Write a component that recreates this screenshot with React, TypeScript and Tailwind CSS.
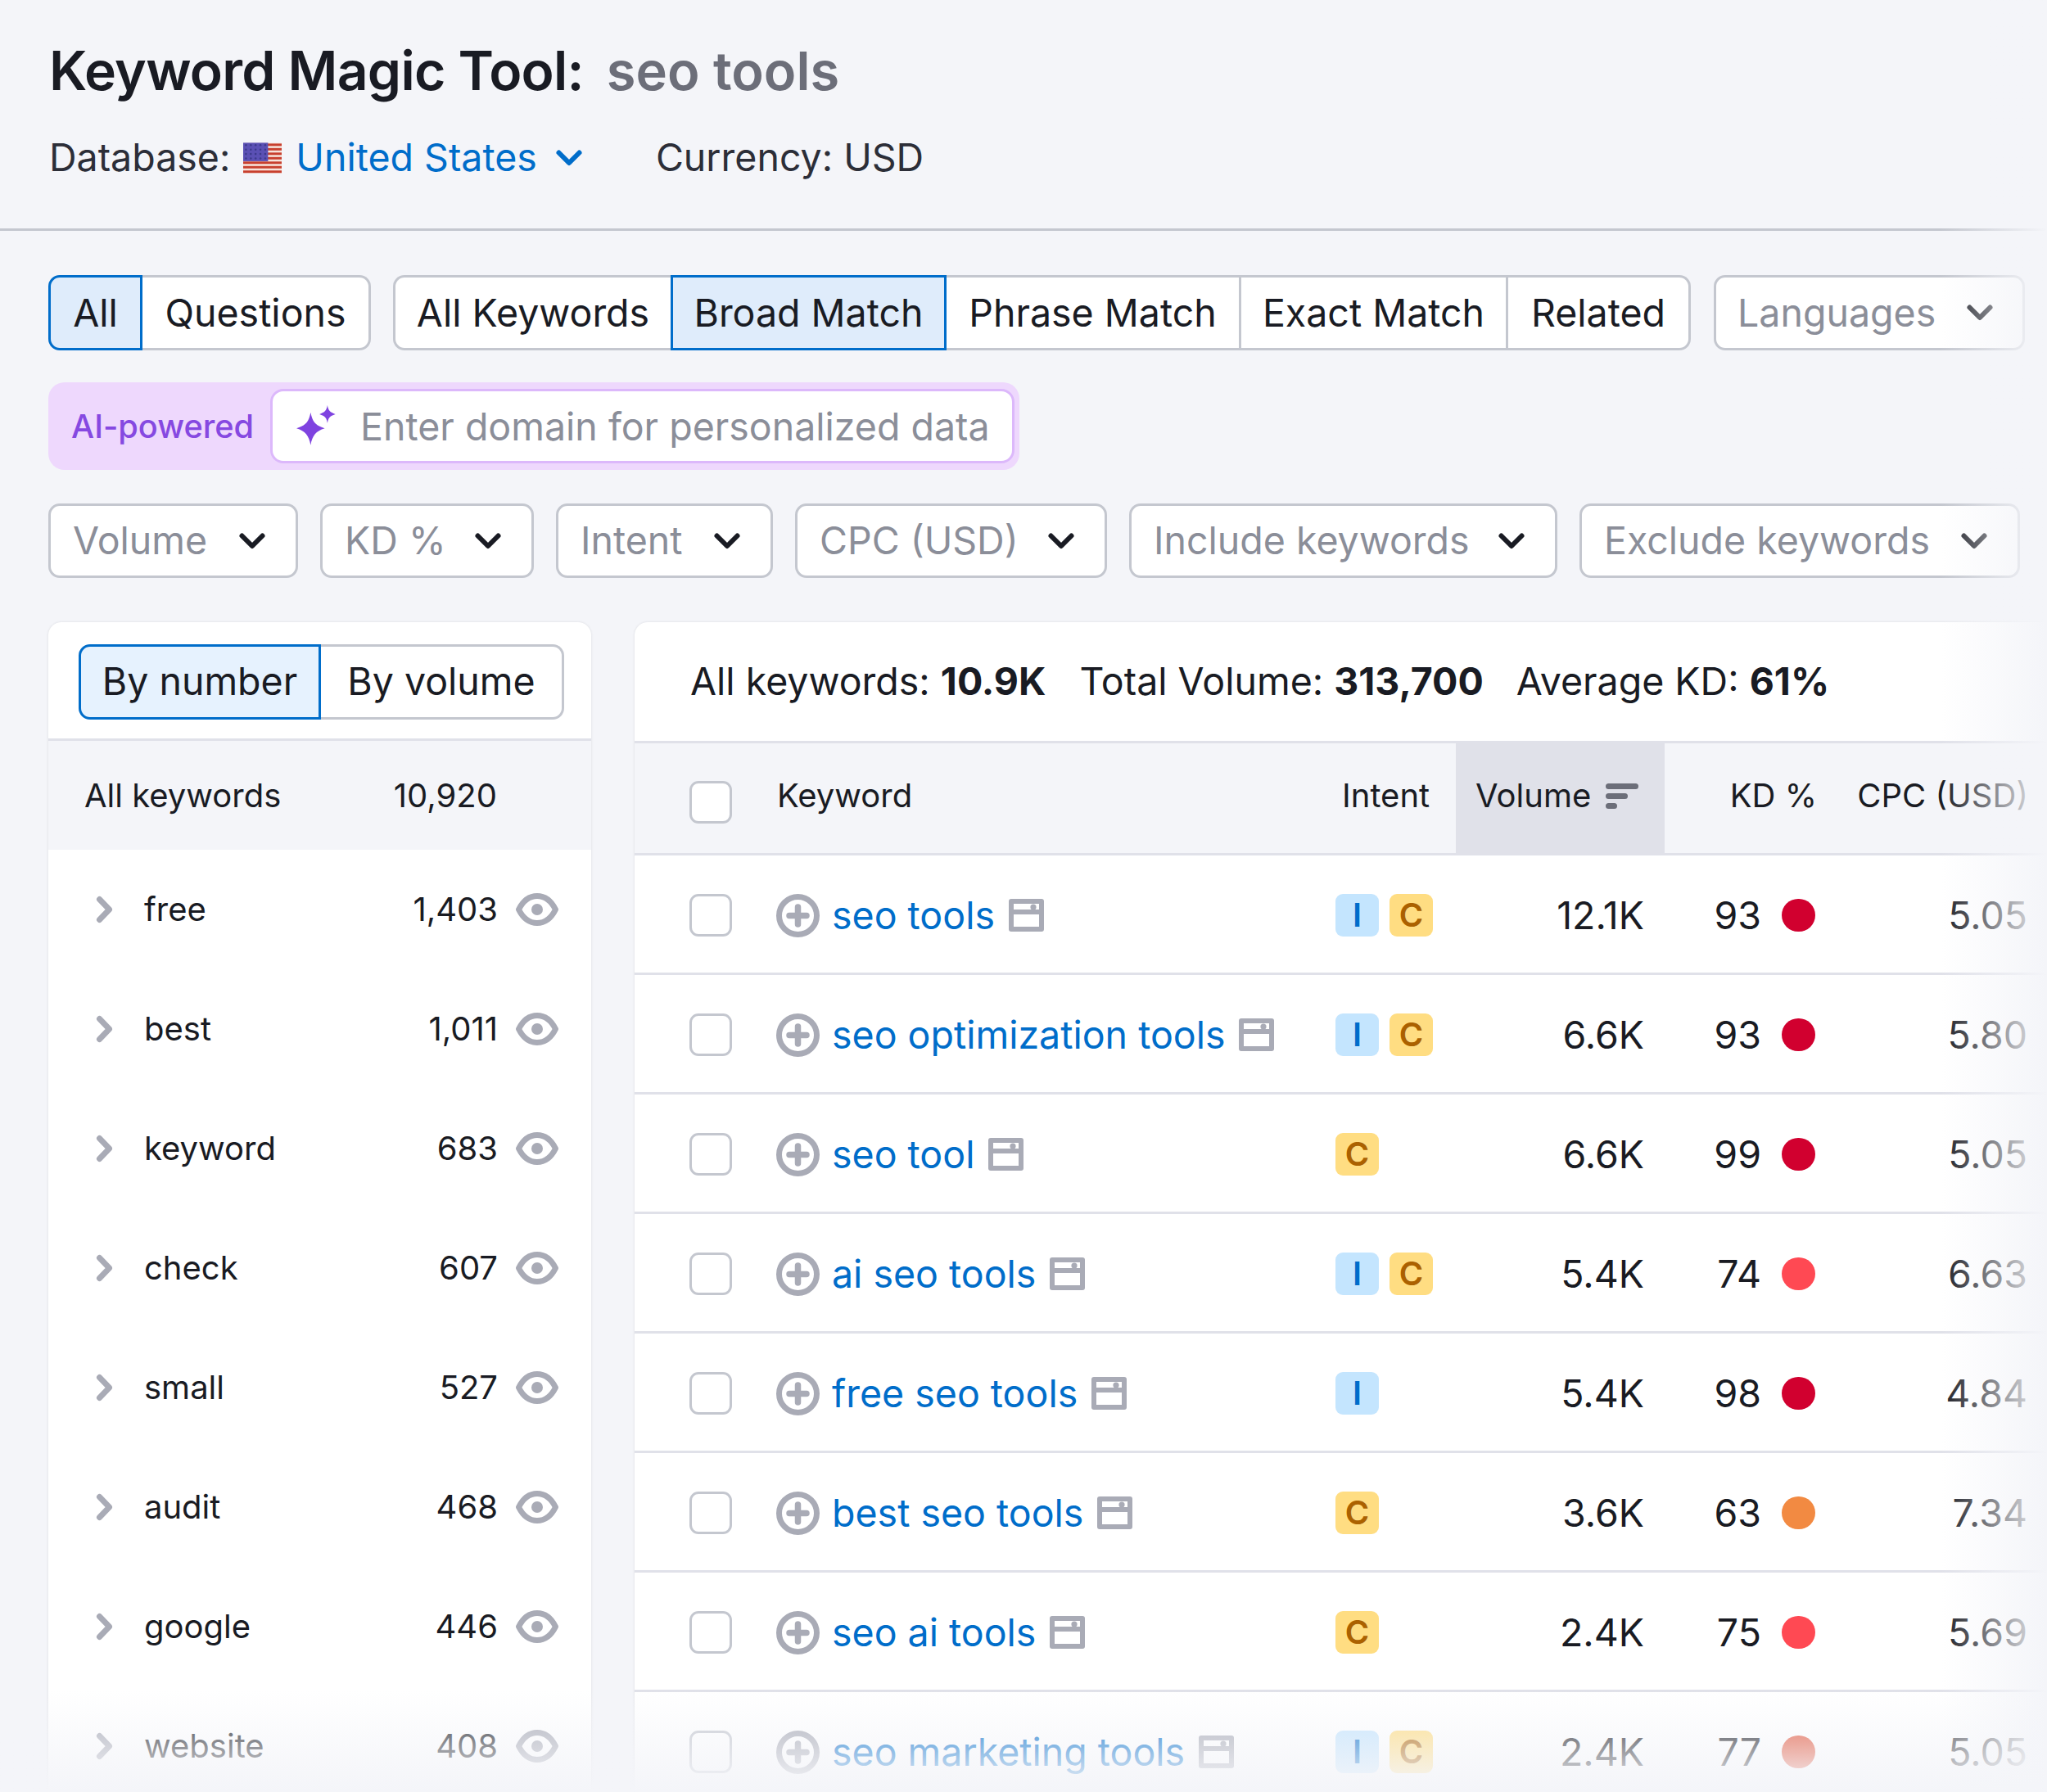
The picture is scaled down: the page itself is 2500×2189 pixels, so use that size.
import React from "react";

const Chevron = ({ c = "#191b23", cls = "" }: { c?: string; cls?: string }) => (
  <svg viewBox="0 0 34 22" className={`w-[34px] h-[22px] shrink-0 ${cls}`}>
    <path d="M4.5 4.5 L17 17 L29.5 4.5" fill="none" stroke={c} strokeWidth="6" strokeLinecap="round" strokeLinejoin="round" />
  </svg>
);

const ChevronRight = () => (
  <svg viewBox="0 0 22 34" className="w-[22px] h-[34px] shrink-0">
    <path d="M4.5 4.5 L16.5 17 L4.5 29.5" fill="none" stroke="#a9abb6" strokeWidth="7" strokeLinecap="round" strokeLinejoin="round" />
  </svg>
);

const Eye = () => (
  <svg viewBox="0 0 52 40" className="w-[52px] h-[40px] shrink-0">
    <path d="M3.5 20 C9 9 17 3.5 26 3.5 C35 3.5 43 9 48.5 20 C43 31 35 36.5 26 36.5 C17 36.5 9 31 3.5 20 Z" fill="none" stroke="#a9abb6" strokeWidth="7" strokeLinejoin="round" />
    <circle cx="26" cy="20" r="7" fill="#a9abb6" />
  </svg>
);

const PlusCircle = () => (
  <svg viewBox="0 0 53 53" className="w-[53px] h-[53px] shrink-0">
    <circle cx="26.5" cy="26.5" r="23" fill="none" stroke="#a9abb6" strokeWidth="7" />
    <path d="M26.5 16 V37 M16 26.5 H37" stroke="#a9abb6" strokeWidth="7.5" strokeLinecap="round" />
  </svg>
);

const Serp = () => (
  <svg viewBox="0 0 43 40" className="w-[43px] h-[40px] shrink-0">
    <rect x="0" y="0" width="43" height="40" rx="3" fill="#a9abb6" />
    <rect x="6" y="6" width="31" height="7" fill="#ffffff" />
    <rect x="6" y="19" width="31" height="15" fill="#ffffff" />
    <circle cx="30" cy="10" r="3.6" fill="#a9abb6" />
  </svg>
);

const SortIcon = () => (
  <svg viewBox="0 0 40 34" className="w-[40px] h-[34px] shrink-0">
    <rect x="0" y="2" width="40" height="7" rx="3.5" fill="#6c6e79" />
    <rect x="0" y="14" width="27" height="7" rx="3.5" fill="#6c6e79" />
    <rect x="0" y="26" width="14" height="7" rx="3.5" fill="#6c6e79" />
  </svg>
);

const Sparkle = () => (
  <svg viewBox="0 0 50 50" className="w-[54px] h-[54px] shrink-0">
    <path d="M17 9 C19 20 23 24 33 27 C23 30 19 35 17 46 C15 35 11 30 1 27 C11 24 15 20 17 9 Z" fill="#7f43e0" />
    <path d="M36 1 C37 7 39 9 45 11 C39 13 37 15 36 21 C35 15 33 13 27 11 C33 9 35 7 36 1 Z" fill="#7f43e0" />
  </svg>
);

const Flag = () => (
  <svg viewBox="0 0 48 38" className="w-[47px] h-[38px] shrink-0">
    <rect width="48" height="38" fill="#f6e4dc" />
    {[0, 1, 2, 3, 4, 5, 6].map((i) => (
      <rect key={i} y={i * 5.6 + 1} width="48" height="3" fill="#c8402f" />
    ))}
    <rect width="31" height="23" fill="#5a50b4" />
    {[0, 1, 2, 3].map((r) =>
      [0, 1, 2, 3, 4].map((c) => <circle key={`${r}${c}`} cx={3.5 + c * 6} cy={3 + r * 5.5} r="1.3" fill="#3c3a8c" />)
    )}
  </svg>
);

const Checkbox = () => (
  <div className="w-[52px] h-[52px] shrink-0 rounded-[11px] border-[3px] border-[#c4c7cf] bg-white" />
);

const seg1 = [
  { t: "All", w: "w-[115px]", on: true, cls: "rounded-l-[14px]" },
  { t: "Questions", w: "w-[279px]", on: false, cls: "rounded-r-[14px] border-l-0" },
];
const seg2 = [
  { t: "All Keywords", w: "w-[339px]", on: false, cls: "rounded-l-[14px] border-r-0" },
  { t: "Broad Match", w: "w-[337px]", on: true, cls: "" },
  { t: "Phrase Match", w: "w-[360px]", on: false, cls: "border-l-0" },
  { t: "Exact Match", w: "w-[326px]", on: false, cls: "border-l-0" },
  { t: "Related", w: "w-[223px]", on: false, cls: "rounded-r-[14px] border-l-0" },
];

const filters = [
  { t: "Volume", w: "w-[305px]" },
  { t: "KD %", w: "w-[261px]" },
  { t: "Intent", w: "w-[265px]" },
  { t: "CPC (USD)", w: "w-[381px]" },
  { t: "Include keywords", w: "w-[523px]" },
  { t: "Exclude keywords", w: "w-[538px]" },
];

const groups = [
  ["free", "1,403"],
  ["best", "1,011"],
  ["keyword", "683"],
  ["check", "607"],
  ["small", "527"],
  ["audit", "468"],
  ["google", "446"],
  ["website", "408"],
];

type Row = { k: string; intents: string[]; vol: string; kd: string; dot: string; cpc: string };
const rows: Row[] = [
  { k: "seo tools", intents: ["I", "C"], vol: "12.1K", kd: "93", dot: "bg-[#d1002f]", cpc: "5.05" },
  { k: "seo optimization tools", intents: ["I", "C"], vol: "6.6K", kd: "93", dot: "bg-[#d1002f]", cpc: "5.80" },
  { k: "seo tool", intents: ["C"], vol: "6.6K", kd: "99", dot: "bg-[#d1002f]", cpc: "5.05" },
  { k: "ai seo tools", intents: ["I", "C"], vol: "5.4K", kd: "74", dot: "bg-[#ff4953]", cpc: "6.63" },
  { k: "free seo tools", intents: ["I"], vol: "5.4K", kd: "98", dot: "bg-[#d1002f]", cpc: "4.84" },
  { k: "best seo tools", intents: ["C"], vol: "3.6K", kd: "63", dot: "bg-[#f28a42]", cpc: "7.34" },
  { k: "seo ai tools", intents: ["C"], vol: "2.4K", kd: "75", dot: "bg-[#ff4953]", cpc: "5.69" },
  { k: "seo marketing tools", intents: ["I", "C"], vol: "2.4K", kd: "77", dot: "bg-[#e2553a]", cpc: "5.05" },
];

const Badge = ({ v }: { v: string }) => (
  <div
    className={`w-[53px] h-[52px] rounded-[9px] flex items-center justify-center text-[40px] font-semibold ${
      v === "I" ? "bg-[#c4e5fe] text-[#006dca]" : "bg-[#ffdd82] text-[#ab6100]"
    }`}
  >
    {v}
  </div>
);

export default function App() {
  return (
    <div className="relative w-[2500px] h-[2189px] overflow-hidden bg-[#f4f5f9] text-[#191b23] [font-family:Inter,sans-serif]">
      <header className="h-[282px] px-[60px] pt-[50px] border-b-[3px] border-[#c4c7cf]">
        <div className="flex items-baseline h-[72px] leading-[72px]">
          <h1 className="text-[66px] font-semibold tracking-[-0.75px]">Keyword Magic Tool:</h1>
          <span className="ml-[28px] text-[65px] font-semibold text-[#6c6e79]">seo tools</span>
        </div>
        <div className="flex items-center h-[60px] mt-[41px] text-[46.5px] text-[#2c2e38]">
          <span>Database:</span>
          <span className="ml-[16px]"><Flag /></span>
          <span className="ml-[17px] text-[#006dca]">United States</span>
          <Chevron c="#006dca" cls="ml-[22px]" />
          <span className="ml-[89px]">Currency: USD</span>
        </div>
      </header>

      <main className="pl-[59px] pt-[54px]">
        <div className="flex h-[92px] text-[46.5px]">
          <div className="flex shrink-0">
            {seg1.map((s) => (
              <div
                key={s.t}
                className={`${s.w} h-full shrink-0 flex items-center justify-center pt-[2px] border-[3px] ${s.cls} ${
                  s.on ? "bg-[#dfecfb] border-[#006dca]" : "bg-white border-[#c4c7cf]"
                }`}
              >
                {s.t}
              </div>
            ))}
          </div>
          <div className="flex shrink-0 ml-[27px]">
            {seg2.map((s) => (
              <div
                key={s.t}
                className={`${s.w} h-full shrink-0 flex items-center justify-center pt-[2px] border-[3px] ${s.cls} ${
                  s.on ? "bg-[#dfecfb] border-[#006dca]" : "bg-white border-[#c4c7cf]"
                }`}
              >
                {s.t}
              </div>
            ))}
          </div>
          <div className="w-[380px] shrink-0 ml-[28px] h-full flex items-center justify-between pl-[26px] pr-[35px] bg-white border-[3px] border-[#c4c7cf] rounded-[14px] text-[#8b8e99]">
            <span className="pt-[2px]">Languages</span>
            <Chevron />
          </div>
        </div>

        <div className="mt-[39px] w-[1186px] h-[107px] bg-[#eed8fd] rounded-[20px] flex items-center pl-[28px] pr-[6px]">
          <span className="w-[243px] shrink-0 pt-[2px] text-[39.7px] font-medium text-[#8649e1]">AI-powered</span>
          <div className="flex-1 h-[91px] bg-white rounded-[16px] border-[3px] border-[#dcb8fb] flex items-center pl-[28px] text-[46.5px] text-[#8b8e99]">
            <Sparkle />
            <span className="ml-[25px] pt-[2px]">Enter domain for personalized data</span>
          </div>
        </div>

        <div className="mt-[41px] flex gap-[27px] h-[91px] text-[46.5px]">
          {filters.map((f) => (
            <div
              key={f.t}
              className={`${f.w} shrink-0 h-full flex items-center justify-between pl-[27px] pr-[36px] bg-white border-[3px] border-[#c4c7cf] rounded-[14px] text-[#8b8e99]`}
            >
              <span>{f.t}</span>
              <Chevron />
            </div>
          ))}
        </div>

        <div className="mt-[54px] flex gap-[53px] w-[2441px]">
          <section className="w-[663px] shrink-0 bg-white rounded-t-[16px] shadow-[0_0_3px_rgba(25,27,35,0.12)]">
            <div className="h-[145px] pt-[27px] pl-[37px] border-b-[3px] border-[#e0e1e9]">
              <div className="flex h-[92px] text-[46.5px]">
                <div className="w-[296px] flex items-center justify-center bg-[#e6f2fe] border-[3px] border-[#006dca] rounded-l-[14px]">By number</div>
                <div className="w-[297px] flex items-center justify-center bg-white border-[3px] border-l-0 border-[#c4c7cf] rounded-r-[14px]">By volume</div>
              </div>
            </div>
            <div className="h-[133px] bg-[#f4f5f9] flex items-center pl-[44px] text-[40px]">
              <span>All keywords</span>
              <span className="ml-auto mr-[115px]">10,920</span>
            </div>
            {groups.map(([n, c]) => (
              <div key={n} className="h-[146px] flex items-center pl-[58px] pr-[40px] text-[40px]">
                <ChevronRight />
                <span className="ml-[37px]">{n}</span>
                <span className="ml-auto">{c}</span>
                <span className="ml-[22px]"><Eye /></span>
              </div>
            ))}
          </section>

          <section className="w-[1725px] shrink-0 bg-white rounded-tl-[16px] shadow-[0_0_3px_rgba(25,27,35,0.12)]">
            <div className="h-[148px] flex items-center pl-[68px] text-[46.5px] border-b-[3px] border-[#e0e1e9]">
              <span>All keywords: <b className="font-bold">10.9K</b></span>
              <span className="ml-[41px]">Total Volume: <b className="font-bold">313,700</b></span>
              <span className="ml-[40px]">Average KD: <b className="font-bold">61%</b></span>
            </div>
            <div className="h-[137px] flex items-stretch bg-[#f4f5f9] text-[40px] border-b-[3px] border-[#e0e1e9]">
              <div className="w-[119px] flex items-center pl-[67px] pt-[9px]"><Checkbox /></div>
              <div className="w-[884px] flex items-center pl-[55px] pb-[6px]">Keyword</div>
              <div className="w-[0px] flex items-center pb-[6px]"><span className="relative -ml-[139px]">Intent</span></div>
              <div className="w-[255px] flex items-center pl-[24px] gap-[18px] bg-[#e0e1e9] pb-[6px]">
                <span>Volume</span>
                <SortIcon />
              </div>
              <div className="w-[186px] flex items-center justify-end pb-[6px]">KD %</div>
              <div className="w-[258px] flex items-center justify-end whitespace-nowrap pb-[6px]">CPC (USD)</div>
            </div>
            {rows.map((r) => (
              <div key={r.k} className="h-[146px] pt-[3px] flex items-center text-[46.5px] border-b-[3px] border-[#e0e1e9]">
                <div className="w-[119px] pl-[67px] shrink-0"><Checkbox /></div>
                <div className="w-[737px] shrink-0 pl-[54px] flex items-center">
                  <PlusCircle />
                  <span className="ml-[15px] pt-[2px] text-[#006dca] whitespace-nowrap">{r.k}</span>
                  <span className="ml-[17px]"><Serp /></span>
                </div>
                <div className="w-[147px] shrink-0 flex gap-[13px]">
                  {r.intents.map((v) => <Badge key={v} v={v} />)}
                </div>
                <div className="w-[230px] shrink-0 pt-[2px] text-right">{r.vol}</div>
                <div className="w-[143px] shrink-0 pt-[2px] text-right">{r.kd}</div>
                <div className={`ml-[25px] w-[41px] h-[40px] rounded-full shrink-0 ${r.dot}`} />
                <div className="w-[259px] shrink-0 pt-[2px] text-right">{r.cpc}</div>
              </div>
            ))}
          </section>
        </div>
      </main>

      <div className="absolute inset-y-0 right-0 w-[130px] bg-gradient-to-r from-[#f4f5f900] to-[#f4f5f9] pointer-events-none" />
      <div className="absolute inset-x-0 bottom-0 h-[125px] bg-gradient-to-b from-[#f4f5f900] to-[#f4f5f9] pointer-events-none" />
    </div>
  );
}
